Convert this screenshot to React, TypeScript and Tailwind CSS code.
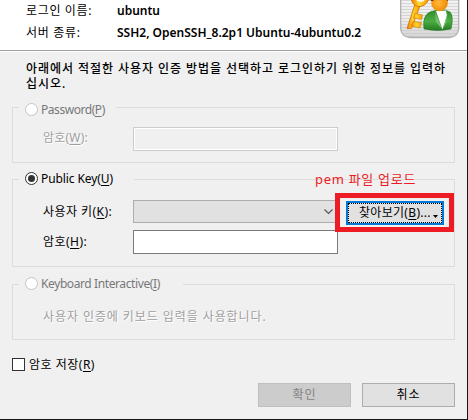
import type { ReactNode } from "react";

function Accel({ children }: { children: ReactNode }) {
  return <span className="underline decoration-1 underline-offset-2">{children}</span>;
}

function Radio({ checked = false, disabled = false }: { checked?: boolean; disabled?: boolean }) {
  return (
    <span
      className={`flex size-[13px] shrink-0 items-center justify-center rounded-full border bg-white ${
        disabled ? "border-[#c4c4c4]" : "border-[#333]"
      }`}
    >
      {checked && <span className="size-[7px] rounded-full bg-[#333]" />}
    </span>
  );
}

function Group({
  legend,
  className,
  legendClassName,
  children,
}: {
  legend: ReactNode;
  className: string;
  legendClassName: string;
  children: ReactNode;
}) {
  return (
    <section className={`w-[443px] border border-[#dcdcdc] ${className}`}>
      <div className={`ml-1.5 flex h-[13px] w-fit items-center gap-[3px] bg-[#f0f0f0] pl-1.5 ${legendClassName}`}>
        {legend}
      </div>
      {children}
    </section>
  );
}

function UserKeyIcon() {
  return (
    <svg width="60" height="39" viewBox="0 0 60 39" className="block">
      <defs>
        <linearGradient id="tile" x1="0" y1="0" x2="0" y2="1">
          <stop offset="0" stopColor="#f8f8f8" />
          <stop offset=".7" stopColor="#ececec" />
          <stop offset="1" stopColor="#d4d4d4" />
        </linearGradient>
        <pattern id="lines" width="4" height="3" patternUnits="userSpaceOnUse">
          <rect width="4" height="1" fill="#c4c4c4" opacity=".6" />
        </pattern>
        <linearGradient id="gold" x1="0" y1="0" x2="1" y2="0">
          <stop offset="0" stopColor="#e87800" />
          <stop offset=".45" stopColor="#ffd62e" />
          <stop offset="1" stopColor="#f49a08" />
        </linearGradient>
        <radialGradient id="face" cx=".45" cy=".5" r=".6">
          <stop offset="0" stopColor="#ffb93c" />
          <stop offset="1" stopColor="#ee8500" />
        </radialGradient>
        <linearGradient id="coat" x1="0" y1="0" x2="0" y2="1">
          <stop offset="0" stopColor="#2f8a2c" />
          <stop offset=".55" stopColor="#4cae42" />
          <stop offset="1" stopColor="#237a22" />
        </linearGradient>
      </defs>
      <rect x=".7" y="-20" width="58" height="57.5" rx="9" fill="url(#tile)" />
      <rect x=".7" y="-20" width="58" height="57.5" rx="9" fill="url(#lines)" stroke="#b0b0b0" strokeWidth="1.3" />
      <path d="M15 4 20 6 11.500 28.500 7 28.500Z" fill="url(#gold)" stroke="#d96b00" strokeWidth=".8" />
      <path d="M15 13.500 22.500 15 21.500 19.500 13.500 18ZM13 21.500 21.500 22.500 20 28 11 26Z" fill="url(#gold)" stroke="#d98200" strokeWidth=".7" />
      <path d="M11-4Q11 5 18 6.500 25 7 28.500 0V-4Z" fill="url(#gold)" stroke="#df7900" />
      <ellipse cx="20.500" cy="0" rx="4" ry="1.800" fill="#fffbe8" />
      <path d="M24 29Q22 15 31 11.500L38 10H45L50 12Q54 16 51 29 38 32 24 29Z" fill="url(#coat)" stroke="#1f7a20" strokeWidth=".6" />
      <path d="M36 11 46 10.500 47 16 42.500 29.500Z" fill="#fff" />
      <path d="M35 12 42.500 29.500 36 22ZM47.500 13 42.500 29.500 46.500 22Z" fill="#78bd70" />
      <ellipse cx="39.500" cy="3" rx="8.300" ry="8.300" fill="url(#face)" />
      <path d="M29.500-3Q30 2.500 33.500 .5L36-3ZM45-3 47.500 1.500 49-3Z" fill="#6d3005" />
    </svg>
  );
}

export default function App() {
  return (
    <main className="h-[420px] w-[468px] overflow-hidden border-r border-b border-[#151515] bg-[#f0f0f0] font-['Noto_Sans','Noto_Sans_CJK_KR',sans-serif] text-[12px] leading-[16px] whitespace-nowrap text-black">
      <header className="flex h-[52px] items-start border-b border-white bg-white">
        <div className="flex h-[51px] w-full border-b border-[#a0a0a0]">
          <dl className="grid w-[400px] shrink-0 grid-cols-[91px_1fr] content-start gap-y-[6px] pt-[3px] pl-[26px]">
            <dt className="tracking-[0.65px]">로그인 이름:</dt>
            <dd className="font-semibold">ubuntu</dd>
            <dt className="tracking-[0.7px]">서버 종류:</dt>
            <dd className="font-semibold">SSH2, OpenSSH_8.2p1 Ubuntu-4ubuntu0.2</dd>
          </dl>
          <UserKeyIcon />
        </div>
      </header>

      <p className="mt-[9px] h-[46px] pl-[26px] leading-[15px] font-medium tracking-[0.94px]">
        아래에서 적절한 사용자 인증 방법을 선택하고 로그인하기 위한 정보를 입력하
        <br />
        십시오.
      </p>

      <div className="flex flex-col gap-4 pl-3">
        <Group
          className="h-14"
          legendClassName="-mt-[5px]"
          legend={
            <>
              <Radio disabled />
              <span className="w-[75px] tracking-[-0.45px] text-[#787878]">Password(<Accel>P</Accel>)</span>
            </>
          }
        >
          <div className="mt-[11px] flex h-6 items-center pl-[30px]">
            <span className="-mt-0.5 w-[90px] tracking-[0.2px] text-[#a0a0a0] [text-shadow:1px_1px_0_#fff]">암호(<Accel>W</Accel>):</span>
            <span className="h-6 w-[205px] border border-[#ccc] bg-[#f0f0f0] shadow-[inset_0_0_0_1px_#fff]" />
          </div>
        </Group>

        <Group
          className="h-[88px]"
          legendClassName="-mt-2"
          legend={
            <>
              <Radio checked />
              <span className="w-[93px] tracking-[-0.1px]">Public Key(<Accel>U</Accel>)</span>
            </>
          }
        >
          <div className="relative mt-[15px] flex h-[23px] items-center pl-[30px]">
            <span className="w-[90px] tracking-[0.45px]">사용자 키(<Accel>K</Accel>):</span>
            <span className="flex h-[23px] w-[205px] items-center justify-end border border-[#adadad] bg-[#e1e1e1] pr-1">
              <svg width="9" height="6" viewBox="0 0 9 6" fill="none" stroke="#555" strokeWidth="1.2">
                <path d="M.5.5 4.500 4.500 8.500.5" />
              </svg>
            </span>
            <span className="absolute -top-[29px] left-[302px] text-[13px] tracking-[0.7px] text-[#ed1c24]">pem 파일 업로드</span>
            <div className="absolute -top-[7px] left-[322px] flex h-[39px] w-[119px] items-center border-[5px] border-[#ed1c24] bg-[#f0f0f0] pl-[6px]">
              <button className="h-6 w-[98px] border-2 border-[#0078d7] bg-[#e1e1e1]">
                <span className="flex h-full items-center border border-dotted border-black pr-[3px] pl-[10px] tracking-[0.3px]">
                  찾아보기(<Accel>B</Accel>)...
                  <svg width="5" height="3" viewBox="0 0 5 3" className="mt-[8px] ml-auto shrink-0"><path d="M0 0H5L2.500 3Z" /></svg>
                </span>
              </button>
            </div>
          </div>
          <div className="mt-[7px] flex h-6 items-center pl-[30px]">
            <span className="w-[90px] tracking-[0.45px]">암호(<Accel>H</Accel>):</span>
            <span className="h-6 w-[205px] border border-[#7a7a7a] bg-white" />
          </div>
        </Group>

        <Group
          className="mt-px h-14"
          legendClassName="-mt-2"
          legend={
            <>
              <Radio disabled />
              <span className="w-[142px] tracking-[-0.4px] text-[#787878]">Keyboard Interactive(<Accel>I</Accel>)</span>
            </>
          }
        >
          <p className="mt-[19px] pl-[30px] tracking-[0.92px] text-[#a0a0a0] [text-shadow:1px_1px_0_#fff]">사용자 인증에 키보드 입력을 사용합니다.</p>
        </Group>
      </div>

      <label className="mt-[18px] flex h-[13px] items-center gap-1 pl-3">
        <span className="size-[13px] border border-[#333] bg-white" />
        <span className="tracking-[0.5px]">암호 저장(<Accel>R</Accel>)</span>
      </label>

      <footer className="mt-3 flex gap-[11px] pl-[258px]">
        <button className="h-6 w-[93px] border border-[#bfbfbf] bg-[#ccc] tracking-[1px] text-[#838383]">확인</button>
        <button className="h-6 w-[93px] border border-[#adadad] bg-[#e1e1e1] tracking-[1px]">취소</button>
      </footer>
    </main>
  );
}
